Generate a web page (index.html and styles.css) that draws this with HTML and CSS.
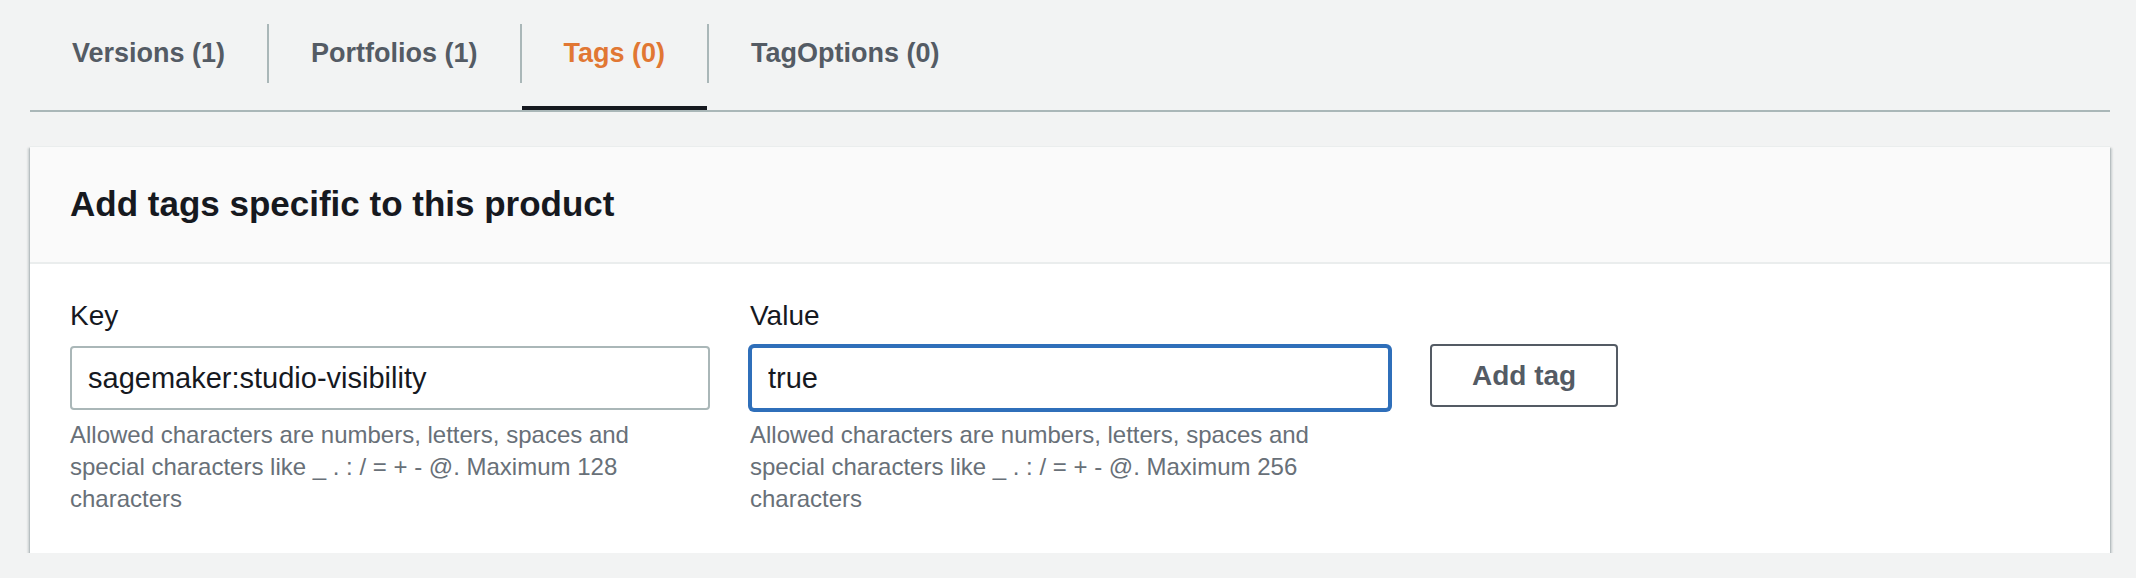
FILE: index.html
```html
<!DOCTYPE html>
<html lang="en">
<head>
<meta charset="utf-8">
<title>Tags</title>
<link rel="stylesheet" href="styles.css">
</head>
<body>
<div class="page">
  <nav class="tabs">
    <div class="tab"><span class="tab-label">Versions (1)</span></div>
    <div class="sep"></div>
    <div class="tab"><span class="tab-label">Portfolios (1)</span></div>
    <div class="sep"></div>
    <div class="tab tab-active"><span class="tab-label">Tags (0)</span></div>
    <div class="sep"></div>
    <div class="tab"><span class="tab-label">TagOptions (0)</span></div>
  </nav>

  <section class="card">
    <header class="card-header">
      <h2 class="card-title">Add tags specific to this product</h2>
    </header>
    <div class="card-body">
      <div class="field">
        <label class="field-label">Key</label>
        <input class="field-input" type="text" value="sagemaker:studio-visibility">
        <p class="field-help">Allowed characters are numbers, letters, spaces and special characters like _ . : / = + - @. Maximum 128 characters</p>
      </div>
      <div class="field">
        <label class="field-label">Value</label>
        <input class="field-input field-input-focus" type="text" value="true">
        <p class="field-help">Allowed characters are numbers, letters, spaces and special characters like _ . : / = + - @. Maximum 256 characters</p>
      </div>
      <div class="action">
        <button class="btn" type="button">Add tag</button>
      </div>
    </div>
  </section>
</div>
</body>
</html>
```

FILE: styles.css
```css
html, body {
  margin: 0;
  padding: 0;
}

body {
  background: #f2f3f3;
  font-family: "Liberation Sans", Arial, sans-serif;
  color: #16191f;
}

.page {
  padding: 0 26px 0 30px;
}

.tabs {
  display: flex;
  align-items: flex-start;
  border-bottom: 2px solid #aab7b8;
}

.tab {
  padding: 24px 42px 23px;
  border-bottom: 4px solid transparent;
}

.tab-label {
  display: block;
  font-size: 27px;
  font-weight: 700;
  line-height: 59px;
  color: #545b64;
  white-space: nowrap;
}

.tab-active {
  border-bottom-color: #16191f;
}

.tab-active .tab-label {
  color: #e17733;
}

.sep {
  width: 2px;
  height: 59px;
  margin-top: 24px;
  background: #aab7b8;
}

.card {
  margin-top: 34px;
  background: #ffffff;
  border-top: 1px solid #eaeded;
  box-shadow: 0 2px 1px 0 rgba(0, 28, 36, 0.5),
              2px 2px 2px 0 rgba(0, 28, 36, 0.18),
              -2px 2px 2px 0 rgba(0, 28, 36, 0.18);
}

.card-header {
  background: #fafafa;
  padding: 35px 40px 36px;
  border-bottom: 2px solid #eaeded;
}

.card-title {
  margin: 0;
  font-size: 35px;
  line-height: 44px;
  font-weight: 700;
  color: #16191f;
}

.card-body {
  display: flex;
  align-items: flex-start;
  gap: 40px;
  padding: 32px 40px 38px;
}

.field {
  width: 640px;
  display: flex;
  flex-direction: column;
}

.field-label {
  font-size: 28px;
  line-height: 40px;
  color: #16191f;
  margin-bottom: 10px;
}

.field-input {
  box-sizing: border-box;
  width: 100%;
  height: 64px;
  margin: 0;
  padding: 0 16px;
  border: 2px solid #aab7b8;
  border-radius: 4px;
  background: #ffffff;
  font-family: "Liberation Sans", Arial, sans-serif;
  font-size: 29px;
  color: #16191f;
  outline: none;
}

.field-input-focus {
  border-color: #2f6fba;
  box-shadow: 0 0 0 2px #2f6fba;
}

.field-help {
  margin: 9px 0 0;
  max-width: 610px;
  font-size: 24px;
  line-height: 32px;
  color: #687078;
}

.action {
  padding-top: 48px;
}

.btn {
  box-sizing: border-box;
  height: 63px;
  padding: 0 40px;
  border: 2px solid #545b64;
  border-radius: 4px;
  background: #ffffff;
  color: #545b64;
  font-family: "Liberation Sans", Arial, sans-serif;
  font-size: 28px;
  font-weight: 700;
  cursor: pointer;
}
```
